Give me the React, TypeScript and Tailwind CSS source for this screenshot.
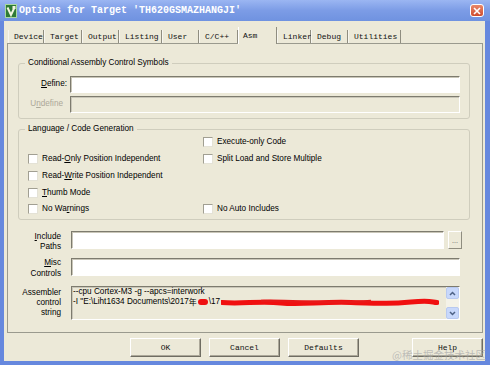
const sans = "font-['Liberation_Sans',Arial,sans-serif] text-[8.2px] text-black";
const mono = "font-['Liberation_Mono','Courier_New',monospace]";

const tabs = [
  { label: "Device", w: "w-[36px]" },
  { label: "Target", w: "w-[38px]" },
  { label: "Output", w: "w-[37px]" },
  { label: "Listing", w: "w-[43px]" },
  { label: "User", w: "w-[37px]" },
  { label: "C/C++", w: "w-[39px]" },
  { label: "Asm", w: "w-[39px]", active: true },
  { label: "Linker", w: "w-[34px]" },
  { label: "Debug", w: "w-[37px]" },
  { label: "Utilities", w: "w-[53px]" },
];

function U({ children }: { children: string }) {
  return <span className="underline underline-offset-[1px]">{children}</span>;
}

function Check({ children }: { children: React.ReactNode }) {
  return (
    <div className="flex items-center">
      <span className="h-[10px] w-[10px] shrink-0 border border-t-[#a19f92] border-l-[#a19f92] border-r-[#e4e2d6] border-b-[#e4e2d6] bg-white" />
      <span className="ml-[4px] whitespace-nowrap">{children}</span>
    </div>
  );
}

const field =
  "border border-t-[#7d7b6e] border-l-[#7d7b6e] border-r-white border-b-white shadow-[inset_1px_1px_0_#c9c6b8]";

function Btn({ label, className = "" }: { label: string; className?: string }) {
  return (
    <div
      className={`flex h-[19px] w-[71px] items-center justify-center border border-t-white border-l-white border-r-[#6f6d62] border-b-[#6f6d62] bg-[#ece9d8] shadow-[inset_-1px_-1px_0_#aca899] ${mono} text-[8px] text-[#111] ${className}`}
    >
      {label}
    </div>
  );
}

export default function App() {
  return (
    <div className="relative flex h-[365px] w-[490px] flex-col overflow-hidden bg-[#ece9d8]">
      {/* Title bar */}
      <div className="flex h-[21px] shrink-0 items-center bg-gradient-to-b from-[#9bb6f2] via-[#7c9ce6] to-[#6f92e0] pl-[5px] pr-[6px]">
        <svg width="12" height="14" viewBox="0 0 12 14" aria-hidden="true">
          <rect x="0.5" y="0.5" width="11" height="13" fill="#2f7a36" stroke="#a9d8a0" />
          <path d="M2.5 3.5 L6 11 L9.5 3.5" fill="none" stroke="#f2f5e0" strokeWidth="2" />
          <rect x="7.5" y="2" width="3" height="3" fill="#f2f5e0" />
        </svg>
        <span className={`ml-[2px] whitespace-nowrap ${mono} text-[10px] font-bold text-white`}>
          Options for Target 'TH620GSMAZHANGJI'
        </span>
        <div className="ml-auto flex h-[13px] w-[14px] items-center justify-center rounded-[3px] border border-white bg-gradient-to-b from-[#e8876a] to-[#cf4b2c]">
          <svg width="8" height="8" viewBox="0 0 8 8" aria-hidden="true">
            <path d="M1 1l6 6M7 1L1 7" stroke="white" strokeWidth="1.6" />
          </svg>
        </div>
      </div>

      {/* Window body */}
      <div className="flex flex-1 flex-col border-b-4 border-l-4 border-r-[5px] border-[#6688de]">
        {/* Tabs */}
        <div className="mt-[6px] flex h-[16px] items-end pl-[4px]">
          {tabs.map((t) =>
            t.active ? (
              <div
                key={t.label}
                className={`${t.w} relative -mb-px flex h-[17px] items-start border-l border-l-white border-r border-r-[#8f8d80] bg-[#ece9d8] pl-[4px] pt-[3px] ${mono} text-[8px] text-[#111]`}
              >
                {t.label}
              </div>
            ) : (
              <div
                key={t.label}
                className={`${t.w} flex h-[13px] items-center border-l border-l-[#f7f6ef] border-r border-r-[#8f8d80] pl-[5px] ${mono} text-[8px] text-[#111]`}
              >
                {t.label}
              </div>
            ),
          )}
        </div>

        {/* Tab panel */}
        <div className={`ml-[3px] mr-[2px] flex h-[290px] flex-col border border-[#9a9a8e] ${sans}`}>
          {/* Conditional Assembly */}
          <fieldset className="ml-[10px] mt-[14px] w-[452px] rounded-[3px] border border-[#cfcdbd] pb-[5px]">
            <legend className="ml-[6px] px-[3px] leading-[10px]">Conditional Assembly Control Symbols</legend>
            <div className="mt-[8px] flex h-[17px] items-center">
              <span className="w-[49px] pr-[1px] text-right">
                <U>D</U>efine:
              </span>
              <div className={`ml-[2px] h-[17px] w-[390px] bg-white ${field}`} />
            </div>
            <div className="mt-[3px] flex h-[17px] items-center">
              <span className="w-[49px] pr-[5px] text-right text-[#aca899]">
                U<U>n</U>define
              </span>
              <div className={`ml-[2px] h-[17px] w-[390px] bg-[#ece9d8] ${field}`} />
            </div>
          </fieldset>

          {/* Language / Code Generation */}
          <fieldset className="ml-[10px] mt-[5px] w-[452px] rounded-[3px] border border-[#cfcdbd] pb-[2px]">
            <legend className="ml-[6px] px-[3px] leading-[10px]">Language / Code Generation</legend>
            <div className="grid grid-cols-[175px_1fr] grid-rows-[17px_17px_17px_16px_16px] items-center pl-[9px]">
              <div />
              <Check>Execute-only Code</Check>
              <Check>
                Read-<U>O</U>nly Position Independent
              </Check>
              <Check>Split Load and Store Multiple</Check>
              <Check>
                Read-<U>W</U>rite Position Independent
              </Check>
              <div />
              <Check>
                <U>T</U>humb Mode
              </Check>
              <div />
              <Check>
                No Wa<U>r</U>nings
              </Check>
              <Check>No Auto Includes</Check>
            </div>
          </fieldset>

          {/* Include Paths */}
          <div className="mt-[11px] flex">
            <div className="w-[53px] text-right leading-[10px]">
              <div className="pt-[1px]">
                <U>I</U>nclude
              </div>
              <div>Paths</div>
            </div>
            <div className={`ml-[10px] h-[18px] w-[373px] bg-white ${field}`} />
            <div className="ml-[4px] flex h-[18px] w-[14px] items-end justify-center border border-t-white border-l-white border-r-[#8f8d80] border-b-[#8f8d80] pb-[4px] text-[7px] leading-none text-[#555]">
              ...
            </div>
          </div>

          {/* Misc Controls */}
          <div className="mt-[6px] flex">
            <div className="w-[53px] text-right leading-[10.5px]">
              <div>
                <U>M</U>isc
              </div>
              <div>Controls</div>
            </div>
            <div className={`ml-[10px] h-[18px] w-[389px] bg-white ${field}`} />
          </div>

          {/* Assembler control string */}
          <div className="mt-[7px] flex">
            <div className="w-[53px] pt-[2px] text-right leading-[10px]">
              <div>Assembler</div>
              <div>control</div>
              <div>string</div>
            </div>
            <div className={`ml-[10px] flex h-[34px] w-[389px] bg-[#ece9d8] ${field}`}>
              <div className="flex-1 overflow-hidden pl-[1px] leading-[10px]">
                <div className="whitespace-nowrap">--cpu Cortex-M3 -g --apcs=interwork</div>
                <div className="flex h-[10px] items-center whitespace-nowrap">
                  <span>-I "E:\Liht1634 Documents\2017</span>
                  <span className="font-['Noto_Sans_CJK_SC',sans-serif] text-[8px]">年</span>
                  <span className="ml-[1px] h-[6px] w-[10px] rounded-full bg-[#ee1111]" />
                  <span className="ml-[1px]">\17</span>
                  <svg width="218" height="9" viewBox="0 0 218 9" className="ml-[1px] shrink-0" aria-hidden="true">
                    <path
                      d="M1 4.5 C20 6 40 3 60 5 S100 3.5 130 4.5 S170 6 190 4 S210 4 216 4.5"
                      fill="none"
                      stroke="#f01010"
                      strokeWidth="5"
                      strokeLinecap="round"
                    />
                    <path d="M40 3 C70 2 110 6 150 3" fill="none" stroke="#e81818" strokeWidth="2.5" />
                  </svg>
                </div>
              </div>
              <div className="flex w-[13px] flex-col bg-[#f4f2e8]">
                <div className="flex h-[12px] items-center justify-center rounded-[2px] border border-[#b8c9f0] bg-[#c8d8fb]">
                  <svg width="7" height="5" viewBox="0 0 7 5" aria-hidden="true">
                    <path d="M1 4l2.5-2.5L6 4" fill="none" stroke="#4d6185" strokeWidth="1.5" />
                  </svg>
                </div>
                <div className="flex-1" />
                <div className="flex h-[12px] items-center justify-center rounded-[2px] border border-[#b8c9f0] bg-[#c8d8fb]">
                  <svg width="7" height="5" viewBox="0 0 7 5" aria-hidden="true">
                    <path d="M1 1l2.5 2.5L6 1" fill="none" stroke="#4d6185" strokeWidth="1.5" />
                  </svg>
                </div>
              </div>
            </div>
          </div>
        </div>

        {/* Buttons */}
        <div className="mt-[5px] flex pl-[126px]">
          <Btn label="OK" />
          <Btn label="Cancel" className="ml-[8px]" />
          <Btn label="Defaults" className="ml-[8px]" />
          <Btn label="Help" className="ml-[53px]" />
        </div>
      </div>

      {/* watermark */}
      <span className="absolute bottom-[5px] right-[4px] font-['Noto_Sans_CJK_SC',sans-serif] text-[10.5px] leading-none text-[#a8a8a8]/70">
        @稀土掘金技术社区
      </span>
    </div>
  );
}
